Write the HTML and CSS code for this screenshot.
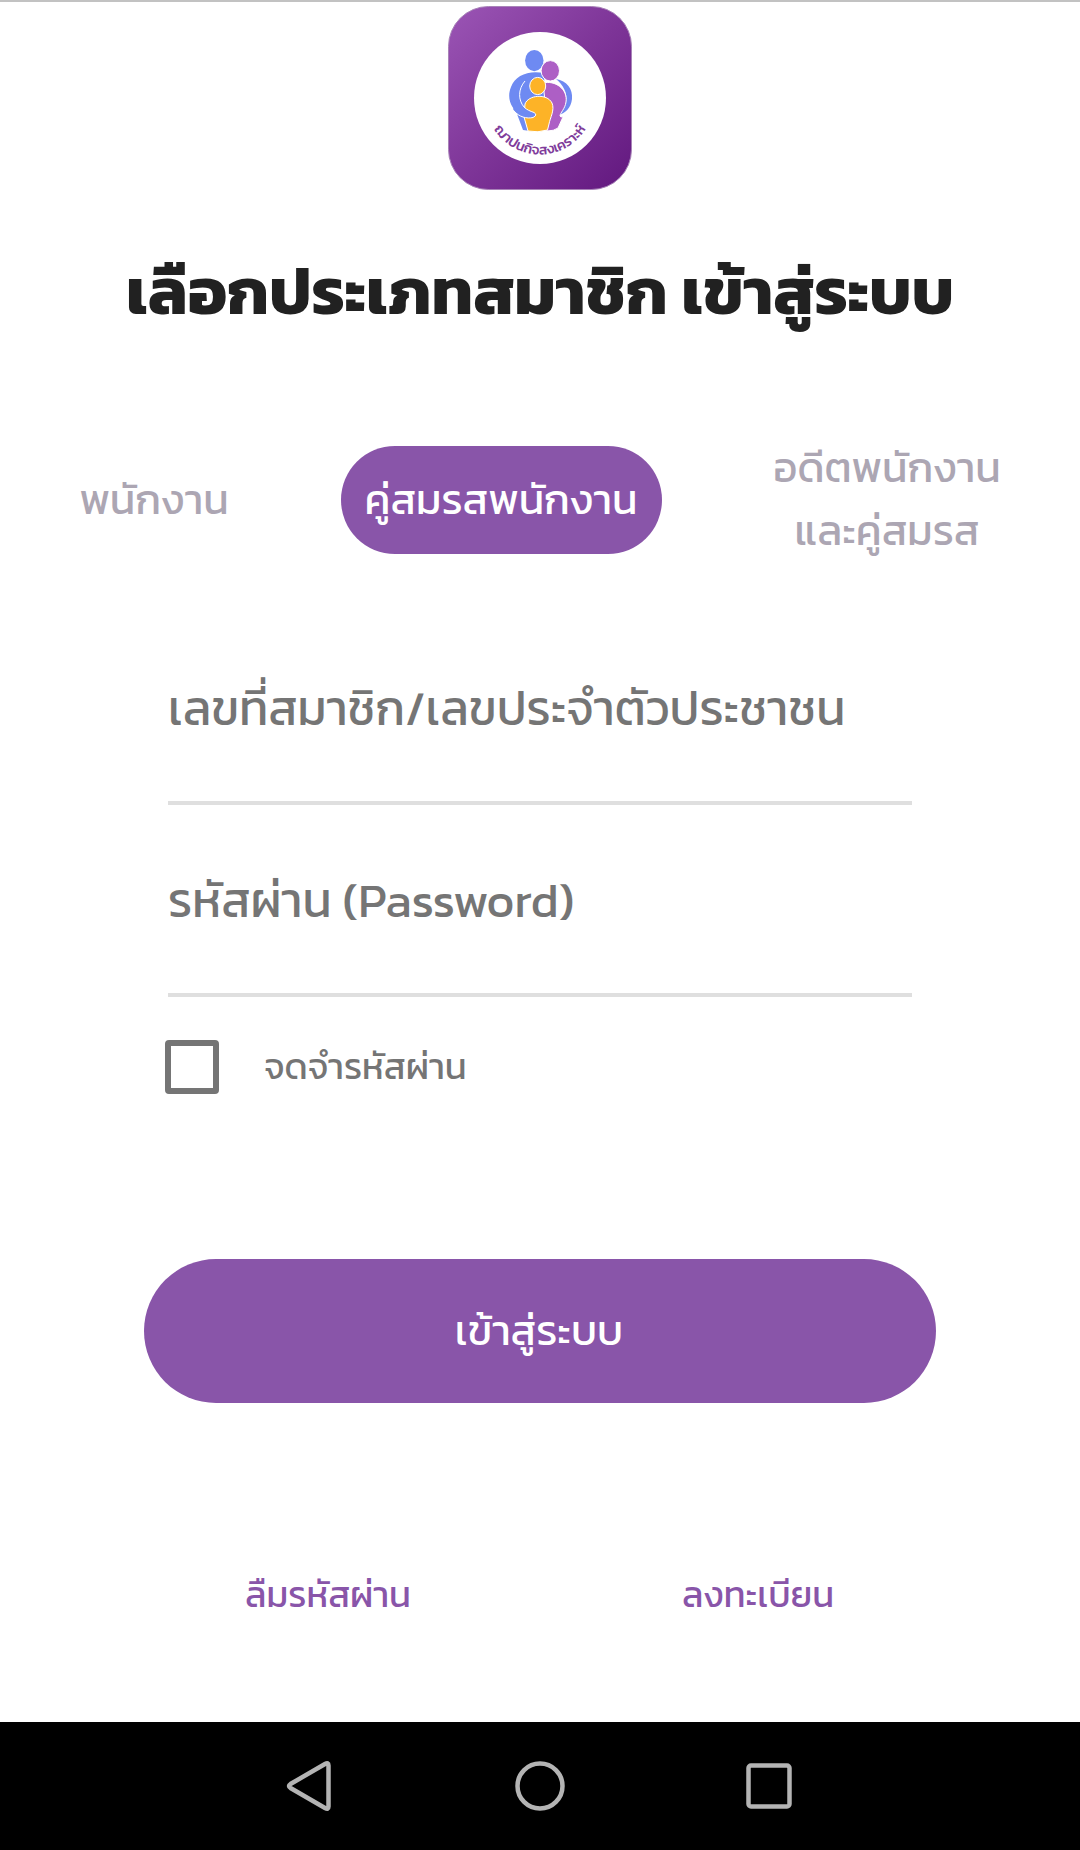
FILE: index.html
```html
<!DOCTYPE html>
<html lang="th">
<head>
    <meta charset="UTF-8" />
    <meta name="viewport" content="width=device-width, initial-scale=1.0"/>
    <title>เข้าสู่ระบบ</title>
    <link rel="stylesheet" href="styles.css">
</head>
<body>

<main class="login-page">
    <svg class="logo" viewBox="0 0 184 184">
        <defs>
            <linearGradient id="logoBg" x1="0" y1="0" x2="1" y2="1">
                <stop offset="0" stop-color="#9b55b5"/>
                <stop offset="0.5" stop-color="#7e3598"/>
                <stop offset="1" stop-color="#62187f"/>
            </linearGradient>
            <path id="logoArc" d="M46 123 A54 54 0 0 0 140 119"/>
        </defs>
        <rect x="0.5" y="0.5" width="183" height="183" rx="40" fill="url(#logoBg)" stroke="#a883b8"/>
        <circle cx="92" cy="92" r="66" fill="#fff"/>
        <!-- parent on the left -->
        <g fill="#6e8af2">
            <ellipse cx="86.3" cy="54.6" rx="9.2" ry="10.6"/>
            <path d="M96 67 C81 64 67 69 63 81 C58 93 64 104 73 109 L88 108 L97 95Z"/>
            <path d="M69 108 L82 112 L82 125 L75 124Z"/>
            <path d="M108 73 C119 75 125 83 124 93 C123 102 117 108 110 109 C112 104 117 102 118 96 C120 87 115 79 108 73Z"/>
        </g>
        <g fill="#ad5fc5" stroke="#fff" stroke-width="1">
            <path d="M95 77 C107 74 120 83 118 96 C117 103 112 107 112 110 C113 112 115 110 115 111 L110 122 Q106 125 99 125 L97 95Z"/>
            <ellipse cx="102.3" cy="64.800" rx="9.2" ry="10.2"/>
        </g>
        <g fill="#fdb327" stroke="#fff" stroke-width="1">
            <path d="M77 98 C80 89 99 87 104 97 C107 104 102 112 101 118 L99.500 124 Q90 127 80 125 L76 111 Z"/>
            <ellipse cx="89.7" cy="80" rx="8" ry="8.6"/>
        </g>
        <!-- arm around the child -->
        <path d="M65 103 C70 111 79 113 85 111.500 Q90 109 86 106.500 C82 105 79 104 76 101 L70 96Z" fill="#6e8af2"/>
        <path d="M77 75 C70 83 70 94 76 101 C79 104 82 105 86 106.500 Q90 109 85 111.500 C79 113 71 111 66 105" fill="none" stroke="#fff" stroke-width="1"/>
        <text class="logo-text"><textPath href="#logoArc">ฌาปนกิจสงเคราะห์</textPath></text>
    </svg>

    <h1>เลือกประเภทสมาชิก เข้าสู่ระบบ</h1>

    <div class="member-types">
        <button type="button" class="type">พนักงาน</button>
        <button type="button" class="type active">คู่สมรสพนักงาน</button>
        <button type="button" class="type">อดีตพนักงาน<br>และคู่สมรส</button>
    </div>

    <form id="loginForm">
        <input class="field" type="text" placeholder="เลขที่สมาชิก/เลขประจำตัวประชาชน" />
        <input class="field" type="password" placeholder="รหัสผ่าน (Password)" />

        <label class="remember">
            <input type="checkbox" />
            <span>จดจำรหัสผ่าน</span>
        </label>

        <button type="submit" class="submit">เข้าสู่ระบบ</button>
    </form>

    <div class="links">
        <a>ลืมรหัสผ่าน</a>
        <a>ลงทะเบียน</a>
    </div>
</main>

<nav class="system-nav">
    <svg viewBox="0 0 56 56"><path d="M42 6 Q45.500 4 45.500 7.500 V48.500 Q45.500 52 42 50 L7.500 30 Q4.500 28 7.500 26 Z"/></svg>
    <svg viewBox="0 0 56 56"><circle cx="28" cy="28" r="22.500"/></svg>
    <svg viewBox="0 0 56 56"><rect x="7.500" y="7.500" width="41" height="41" rx="2.500"/></svg>
</nav>

</body>
</html>
```

FILE: styles.css
```css
* {
    box-sizing: border-box;
}

body {
    margin: 0;
    height: 1850px;
    display: flex;
    flex-direction: column;
    background-color: #ffffff;
    font-family: Kanit, Prompt, "Noto Sans Thai", "Noto Sans", sans-serif;
}

button,
input {
    font-family: inherit;
    border: none;
    padding: 0;
    background: none;
}

.login-page {
    height: 1722px;
    border-top: 2px solid #c2c2c2;
    padding-top: 4px;
    display: flex;
    flex-direction: column;
    align-items: center;
}

.logo {
    width: 184px;
    height: 184px;
}

.logo-text {
    font-size: 14px;
    font-weight: 500;
    fill: #803c9b;
}

h1 {
    margin: 56px 0 0;
    height: 90px;
    line-height: 90px;
    font-size: 66px;
    font-weight: 700;
    color: #212121;
    white-space: nowrap;
}

.member-types {
    width: 100%;
    height: 126px;
    margin-top: 100px;
    display: grid;
    grid-template-columns: 308px 386px 386px;
    align-items: center;
    justify-items: center;
}

.type {
    padding-bottom: 2px;
    font-size: 42px;
    line-height: 63px;
    color: #aca6b3;
    white-space: nowrap;
}

.type.active {
    width: 321px;
    height: 108px;
    border-radius: 54px;
    background-color: #8955a9;
    color: #ffffff;
}

form {
    width: 792px;
    margin-top: 51px;
    display: flex;
    flex-direction: column;
    align-items: center;
}

.field {
    width: 744px;
    height: 192px;
    padding-top: 2px;
    border-bottom: 4px solid #dfdfdf;
    font-size: 48px;
    outline: none;
}

.field::placeholder {
    color: #757575;
    opacity: 1;
}

.remember {
    width: 750px;
    height: 54px;
    margin-top: 43px;
    display: flex;
    align-items: center;
    gap: 45px;
    font-size: 36px;
    color: #757575;
}

.remember span {
    padding-bottom: 2px;
}

.remember input {
    appearance: none;
    width: 54px;
    height: 54px;
    margin: 0;
    border: 6px solid #757575;
    border-radius: 4px;
}

.submit {
    width: 792px;
    height: 144px;
    margin-top: 165px;
    padding: 0 2px 2px 0;
    border-radius: 72px;
    background-color: #8955a9;
    color: #ffffff;
    font-size: 42px;
}

.links {
    width: 860px;
    margin-top: 161px;
    display: grid;
    grid-template-columns: 436px 424px;
    justify-items: center;
    line-height: 60px;
    font-size: 36px;
    color: #8955a9;
}

.system-nav {
    height: 128px;
    background-color: #000000;
    display: flex;
    justify-content: center;
    align-items: center;
    gap: 173px;
}

.system-nav svg {
    width: 56px;
    height: 56px;
    fill: none;
    stroke: #b4b4b4;
    stroke-width: 4.500;
}
```
